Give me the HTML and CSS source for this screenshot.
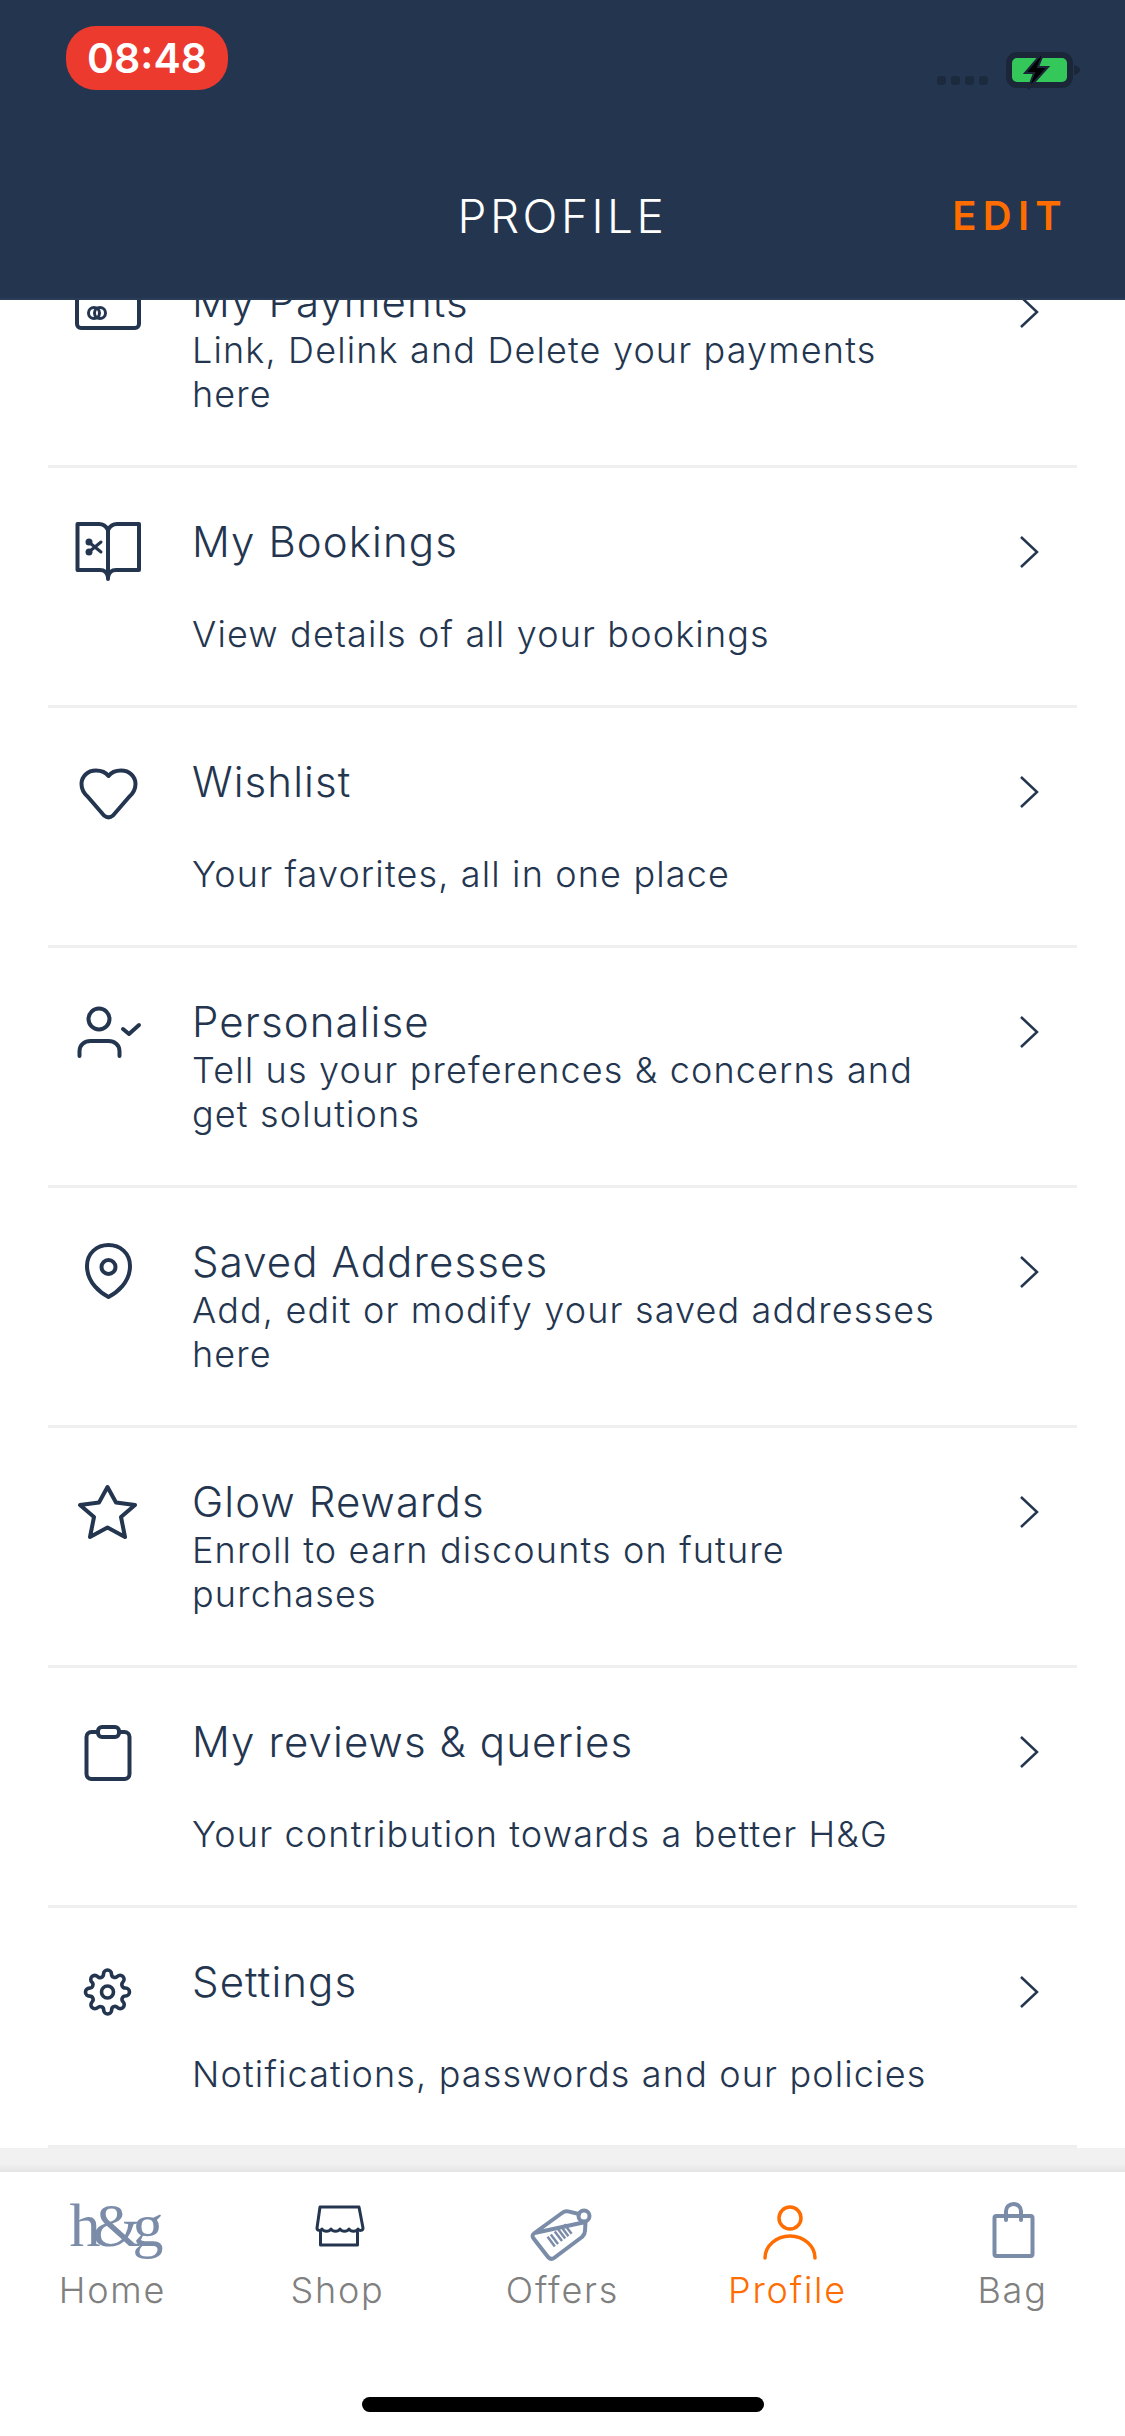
FILE: index.html
```html
<!DOCTYPE html>
<html lang="en">
<head>
  <meta charset="UTF-8">
  <meta name="viewport" content="width=device-width, initial-scale=1.0">
  <title>Profile</title>
  <link rel="stylesheet" href="styles.css">
</head>
<body>
  <div class="page">
    <header class="top">
      <div class="status">
        <span class="clock">08:48</span>
        <div class="status-right">
          <div class="signal"><i></i><i></i><i></i><i></i></div>
          <svg class="battery" width="76" height="38" viewBox="0 0 76 38">
            <rect x="3" y="3" width="61" height="30" rx="8" fill="#34c759" stroke="#1b2639" stroke-width="6"/>
            <path d="M68 13c4 1 6 3 6 5s-2 4-6 5z" fill="#1b2639"/>
            <path d="M37 0 19 21h9l-6 16 20-22h-10l6-15z" fill="#000" stroke="#1b2639" stroke-width="2"/>
          </svg>
        </div>
      </div>
      <div class="top-title">
        <h1>PROFILE</h1>
        <a class="edit">EDIT</a>
      </div>
    </header>

    <main class="content">
      <div class="menu">
        <div class="row">
          <svg class="row-icon" viewBox="0 0 80 80">
            <rect x="9" y="18" width="62" height="38" rx="4"/>
            <circle cx="26" cy="41" r="5.500" class="thin"/><circle cx="32" cy="41" r="5.500" class="thin"/>
          </svg>
          <div class="row-text">
            <h3>My Payments</h3>
            <p>Link, Delink and Delete your payments here</p>
          </div>
          <svg class="chev" viewBox="0 0 24 40"><path d="M4 5l16 15L4 35"/></svg>
        </div>

        <div class="row">
          <svg class="row-icon" viewBox="0 0 80 80">
            <path d="M40 18c-2-4-5-6-9-6H9.500v46H32c4 0 7 2 8 7 1-5 4-7 8-7h23V12H49c-4 0-7 2-9 6zM40 18v49"/>
            <circle cx="21" cy="30" r="3.500" class="solid"/><circle cx="21" cy="40" r="3.500" class="solid"/>
            <path d="M22 31l11 9M22 39l11-9" class="thin"/>
          </svg>
          <div class="row-text">
            <h3>My Bookings</h3>
            <p>View details of all your bookings</p>
          </div>
          <svg class="chev" viewBox="0 0 24 40"><path d="M4 5l16 15L4 35"/></svg>
        </div>

        <div class="row">
          <svg class="row-icon" viewBox="0 0 80 80">
            <path d="M40.500 24c-3-4-7.500-5.500-12.500-5.500-8.500 0-14.500 6-14.500 13.500 0 6 3 10 6.500 13l16 18.500c3 2.500 6 2.500 9 0L61 45c3.500-3 6.500-7 6.500-13 0-7.500-6-13.500-14.500-13.500-5 0-9.500 1.500-12.500 5.500z"/>
          </svg>
          <div class="row-text">
            <h3>Wishlist</h3>
            <p>Your favorites, all in one place</p>
          </div>
          <svg class="chev" viewBox="0 0 24 40"><path d="M4 5l16 15L4 35"/></svg>
        </div>

        <div class="row">
          <svg class="row-icon" viewBox="0 0 80 80">
            <circle cx="31" cy="27" r="10.500"/>
            <path d="M11.500 64v-5c0-6 5-10 11-10h18c6 0 11 4 11 10v5M55 37l6 5 10-9"/>
          </svg>
          <div class="row-text">
            <h3>Personalise</h3>
            <p>Tell us your preferences &amp; concerns and get solutions</p>
          </div>
          <svg class="chev" viewBox="0 0 24 40"><path d="M4 5l16 15L4 35"/></svg>
        </div>

        <div class="row">
          <svg class="row-icon" viewBox="0 0 80 80">
            <path d="M40.500 65C33 61 19 51 19 34c0-13 10-21 21.500-21S62 21 62 34c0 17-14 27-21.500 31z"/>
            <circle cx="40.500" cy="35" r="7"/>
          </svg>
          <div class="row-text">
            <h3>Saved Addresses</h3>
            <p>Add, edit or modify your saved addresses here</p>
          </div>
          <svg class="chev" viewBox="0 0 24 40"><path d="M4 5l16 15L4 35"/></svg>
        </div>

        <div class="row">
          <svg class="row-icon" viewBox="0 0 80 80">
            <path d="M39.500 15 48 30.500 67 33 53 45l4 20-17.500-9.500L22 65l4-20-14-12 19-2.500z"/>
          </svg>
          <div class="row-text">
            <h3>Glow Rewards</h3>
            <p>Enroll to earn discounts on future purchases</p>
          </div>
          <svg class="chev" viewBox="0 0 24 40"><path d="M4 5l16 15L4 35"/></svg>
        </div>

        <div class="row">
          <svg class="row-icon" viewBox="0 0 80 80">
            <rect x="18.500" y="20" width="43" height="47" rx="5"/>
            <rect x="30" y="15" width="21" height="10" rx="4" fill="#fff"/>
          </svg>
          <div class="row-text">
            <h3>My reviews &amp; queries</h3>
            <p>Your contribution towards a better H&amp;G</p>
          </div>
          <svg class="chev" viewBox="0 0 24 40"><path d="M4 5l16 15L4 35"/></svg>
        </div>

        <div class="row">
          <svg class="row-icon" viewBox="0 0 80 80">
            <g transform="translate(15.500 16) scale(2)" stroke-width="1.800">
              <circle cx="12" cy="12" r="3"/>
              <path d="M19.400 15a1.650 1.650 0 0 0 .33 1.820l.06.06a2 2 0 0 1 0 2.830 2 2 0 0 1-2.830 0l-.06-.06a1.650 1.650 0 0 0-1.820-.33 1.650 1.650 0 0 0-1 1.510V21a2 2 0 0 1-2 2 2 2 0 0 1-2-2v-.09A1.650 1.650 0 0 0 9 19.400a1.650 1.650 0 0 0-1.820.33l-.06.06a2 2 0 0 1-2.830 0 2 2 0 0 1 0-2.830l.06-.06a1.650 1.650 0 0 0 .33-1.820 1.650 1.650 0 0 0-1.510-1H3a2 2 0 0 1-2-2 2 2 0 0 1 2-2h.09A1.650 1.650 0 0 0 4.600 9a1.650 1.650 0 0 0-.33-1.820l-.06-.06a2 2 0 0 1 0-2.830 2 2 0 0 1 2.830 0l.06.06a1.650 1.650 0 0 0 1.820.33H9a1.650 1.650 0 0 0 1-1.510V3a2 2 0 0 1 2-2 2 2 0 0 1 2 2v.09a1.650 1.650 0 0 0 1 1.510 1.650 1.650 0 0 0 1.820-.33l.06-.06a2 2 0 0 1 2.830 0 2 2 0 0 1 0 2.830l-.06.06a1.650 1.650 0 0 0-.33 1.820V9a1.650 1.650 0 0 0 1.510 1H21a2 2 0 0 1 2 2 2 2 0 0 1-2 2h-.09a1.650 1.650 0 0 0-1.510 1z"/>
            </g>
          </svg>
          <div class="row-text">
            <h3>Settings</h3>
            <p>Notifications, passwords and our policies</p>
          </div>
          <svg class="chev" viewBox="0 0 24 40"><path d="M4 5l16 15L4 35"/></svg>
        </div>
      </div>
      <div class="tab-shadow"></div>
    </main>

    <nav class="tabs">
      <div class="tab">
        <div class="tab-icon"><span class="logo">h&amp;g</span></div>
        <span class="tab-label">Home</span>
      </div>
      <div class="tab">
        <svg class="tab-icon navy" viewBox="0 0 100 72">
          <path d="M32 15h39l4 21c0 3-4 3-5 1-2 3-7 3-9 0-2 3-7 3-9 0-2 3-7 3-9 0-2 3-7 3-9 0-1 2-5 2-5-1z"/>
          <path d="M32.500 40v13h37V40"/>
        </svg>
        <span class="tab-label">Shop</span>
      </div>
      <div class="tab">
        <svg class="tab-icon slate" viewBox="0 0 100 72">
          <path d="M21.500 41 49 21c2-1.500 4-2 6-1.600L66 22M72.500 30l-.5 9c0 2-1 4-3 6L41 66c-2 1.500-4 1-6-1L21 47c-2-2-2-4 .5-6z"/>
          <circle cx="71" cy="24" r="5.500"/>
          <g transform="rotate(-37 47 43)" class="bars">
            <path d="M36 37v12M40 37v12M45 37v12M49 37v12M53 37v12M57 37v12"/>
          </g>
        </svg>
        <span class="tab-label">Offers</span>
      </div>
      <div class="tab active">
        <svg class="tab-icon" viewBox="0 0 100 72">
          <circle cx="52" cy="26" r="11"/>
          <path d="M27 66a25 22 0 0 1 50 0"/>
        </svg>
        <span class="tab-label">Profile</span>
      </div>
      <div class="tab">
        <svg class="tab-icon slate" viewBox="0 0 100 72">
          <rect x="31.500" y="24" width="38" height="40" rx="2"/>
          <path d="M43 28v-9a7.500 7 0 0 1 15 0v9"/>
        </svg>
        <span class="tab-label">Bag</span>
      </div>
      <div class="home-bar"></div>
    </nav>
  </div>
</body>
</html>
```

FILE: styles.css
```css
* {
  box-sizing: border-box;
}

body {
  margin: 0;
  background: #fff;
  font-family: Inter, "Liberation Sans", sans-serif;
  color: #24364f;
}

.page {
  width: 1125px;
  height: 2436px;
  display: flex;
  flex-direction: column;
  overflow: hidden;
}

/* header */
.top {
  height: 300px;
  background: #24364f;
  border-bottom: 2px solid #2b3d56;
  position: relative;
  z-index: 2;
  flex-shrink: 0;
}

.status {
  display: flex;
  justify-content: space-between;
  padding: 26px 43px 0 66px;
}

.clock {
  width: 162px;
  height: 64px;
  background: #ec3a2f;
  border-radius: 30px;
  color: #fff;
  font-size: 41px;
  font-weight: 600;
  line-height: 64px;
  text-align: center;
}

.status-right {
  display: flex;
  align-items: flex-start;
  gap: 18px;
  padding-top: 26px;
}

.signal {
  display: flex;
  gap: 5px;
  padding-top: 24px;
}

.signal i {
  width: 9px;
  height: 9px;
  border-radius: 3px;
  background: #1c2a3e;
}

.top-title {
  position: relative;
  margin-top: 101px;
  text-align: center;
}

.top-title h1 {
  margin: 0;
  color: #fff;
  font-size: 46px;
  font-weight: 300;
  line-height: 50px;
  letter-spacing: 3.500px;
}

.edit {
  position: absolute;
  right: 57px;
  top: 0;
  color: #ff6d00;
  font-size: 40px;
  font-weight: 600;
  line-height: 50px;
  letter-spacing: 6.300px;
}

/* list */
.content {
  flex: 1;
  overflow: hidden;
}

.menu {
  margin-top: -72px;
  padding: 0 48px;
}

.row {
  height: 240px;
  display: flex;
  align-items: flex-start;
  border-bottom: 3px solid #efefef;
}

.row-icon {
  width: 80px;
  height: 80px;
  margin: 44px 44px 0 20px;
  flex-shrink: 0;
  fill: none;
  stroke: #24364f;
  stroke-width: 4;
  stroke-linecap: round;
  stroke-linejoin: round;
}

.row-icon .thin {
  stroke-width: 3;
}

.row-icon .solid {
  fill: #24364f;
  stroke: none;
}

.row-text {
  width: 750px;
  padding-top: 48px;
}

.row-text h3 {
  margin: 0;
  font-size: 42px;
  font-weight: 300;
  line-height: 52px;
  letter-spacing: 1.100px;
  white-space: nowrap;
}

.row-text p {
  margin: 0;
  height: 88px;
  display: flex;
  align-items: flex-end;
  font-size: 36px;
  font-weight: 300;
  line-height: 44px;
  letter-spacing: 1.150px;
}

.chev {
  width: 24px;
  height: 40px;
  margin: 64px 0 0 75px;
  flex-shrink: 0;
  fill: none;
  stroke: #24364f;
  stroke-width: 2.500;
}

.tab-shadow {
  height: 24px;
  background: linear-gradient(#f1f1f1 65%, #e4e4e4);
}

/* bottom tabs */
.tabs {
  height: 264px;
  display: flex;
  position: relative;
  flex-shrink: 0;
  background: #fff;
  padding-top: 20px;
}

.tab {
  width: 225px;
  display: flex;
  flex-direction: column;
  align-items: center;
  color: #808080;
}

.tab-icon {
  width: 100px;
  height: 72px;
  fill: none;
  stroke-width: 3.500;
  stroke-linecap: round;
  stroke-linejoin: round;
  stroke: #ff6d00;
}

.tab-icon.navy {
  stroke: #24364f;
  stroke-width: 3;
}

.tab-icon.slate {
  stroke: #7b8ca8;
  stroke-width: 4;
}

.bars {
  stroke-width: 2.500;
  stroke-linecap: butt;
}

.logo {
  display: block;
  font-family: "Liberation Serif", serif;
  font-size: 62px;
  line-height: 66px;
  letter-spacing: -8px;
  text-align: center;
  color: #7b8ca8;
}

.tab-label {
  font-size: 36px;
  font-weight: 300;
  line-height: 40px;
  margin-top: 6px;
  letter-spacing: 1.800px;
}

.tab.active .tab-label {
  color: #ff6d00;
}

.home-bar {
  position: absolute;
  left: 362px;
  bottom: 24px;
  width: 402px;
  height: 15px;
  border-radius: 8px;
  background: #000;
}
```
